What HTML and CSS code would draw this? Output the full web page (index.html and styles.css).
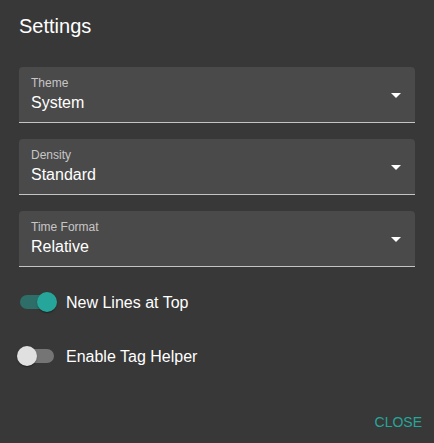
FILE: index.html
```html
<!DOCTYPE html>
<html lang="en">
<head>
<meta charset="utf-8">
<title>Settings</title>
<link rel="stylesheet" href="styles.css">
</head>
<body>
<div class="dialog">
  <h2 class="title">Settings</h2>
  <div class="content">
    <div class="fields">
      <div class="field">
        <div class="field-text">
          <div class="label">Theme</div>
          <div class="value">System</div>
        </div>
        <svg class="arrow" viewBox="0 0 24 24" width="24" height="24"><path d="M7 10l5 5 5-5z" fill="#fff"/></svg>
      </div>
      <div class="field">
        <div class="field-text">
          <div class="label">Density</div>
          <div class="value">Standard</div>
        </div>
        <svg class="arrow" viewBox="0 0 24 24" width="24" height="24"><path d="M7 10l5 5 5-5z" fill="#fff"/></svg>
      </div>
      <div class="field">
        <div class="field-text">
          <div class="label">Time Format</div>
          <div class="value">Relative</div>
        </div>
        <svg class="arrow" viewBox="0 0 24 24" width="24" height="24"><path d="M7 10l5 5 5-5z" fill="#fff"/></svg>
      </div>
    </div>
    <div class="switches">
      <label class="switch-row">
        <span class="switch on"><span class="track"></span><span class="thumb"></span></span>
        <span class="switch-label">New Lines at Top</span>
      </label>
      <label class="switch-row">
        <span class="switch"><span class="track"></span><span class="thumb"></span></span>
        <span class="switch-label">Enable Tag Helper</span>
      </label>
    </div>
  </div>
  <div class="actions">
    <button class="btn">CLOSE</button>
  </div>
</div>
</body>
</html>
```

FILE: styles.css
```css
html, body {
  margin: 0;
  padding: 0;
  background: #383838;
}
body {
  font-family: "Liberation Sans", Arial, sans-serif;
  color: #fff;
  width: 434px;
  height: 443px;
  overflow: hidden;
}
.dialog {
  display: flex;
  flex-direction: column;
}
.title {
  margin: 0;
  padding: 10px 19px 0;
  font-size: 20px;
  line-height: 32px;
  font-weight: 400;
}
.content {
  padding: 0 19px;
  margin-top: 25px;
}
.fields {
  display: flex;
  flex-direction: column;
  gap: 16px;
}
.field {
  height: 56px;
  box-sizing: border-box;
  background: #4a4a4a;
  border-radius: 4px 4px 0 0;
  border-bottom: 1px solid #c4c4c4;
  display: flex;
  align-items: center;
  padding: 0 7px 0 12px;
}
.field-text {
  flex: 1;
  align-self: flex-start;
  padding-top: 8px;
}
.label {
  font-size: 12px;
  line-height: 16px;
  color: rgba(255, 255, 255, 0.7);
}
.value {
  font-size: 16px;
  line-height: 19px;
  margin-top: 2px;
}
.arrow {
  display: block;
  flex: none;
}
.switches {
  margin-top: 16px;
  display: flex;
  flex-direction: column;
  gap: 16px;
}
.switch-row {
  display: flex;
  align-items: center;
  height: 38px;
  margin-left: -11px;
}
.switch {
  position: relative;
  width: 58px;
  height: 38px;
  padding: 12px;
  box-sizing: border-box;
  flex: none;
}
.track {
  display: block;
  width: 34px;
  height: 14px;
  border-radius: 7px;
  background: #757575;
}
.thumb {
  position: absolute;
  top: 9px;
  left: 9px;
  width: 20px;
  height: 20px;
  border-radius: 50%;
  background: #e0e0e0;
  box-shadow: 0 2px 1px -1px rgba(0,0,0,0.2), 0 1px 1px 0 rgba(0,0,0,0.14), 0 1px 3px 0 rgba(0,0,0,0.12);
}
.switch.on .track {
  background: #2e6e68;
}
.switch.on .thumb {
  left: 29px;
  background: #26a69a;
}
.switch-label {
  font-size: 16px;
  line-height: 19px;
}
.actions {
  margin-top: 29px;
  display: flex;
  justify-content: flex-end;
  padding-right: 4px;
}
.btn {
  font-family: "Liberation Sans", Arial, sans-serif;
  background: none;
  border: 0;
  padding: 6px 8px;
  font-size: 14px;
  line-height: 24px;
  color: #26a69a;
  cursor: pointer;
}
```
